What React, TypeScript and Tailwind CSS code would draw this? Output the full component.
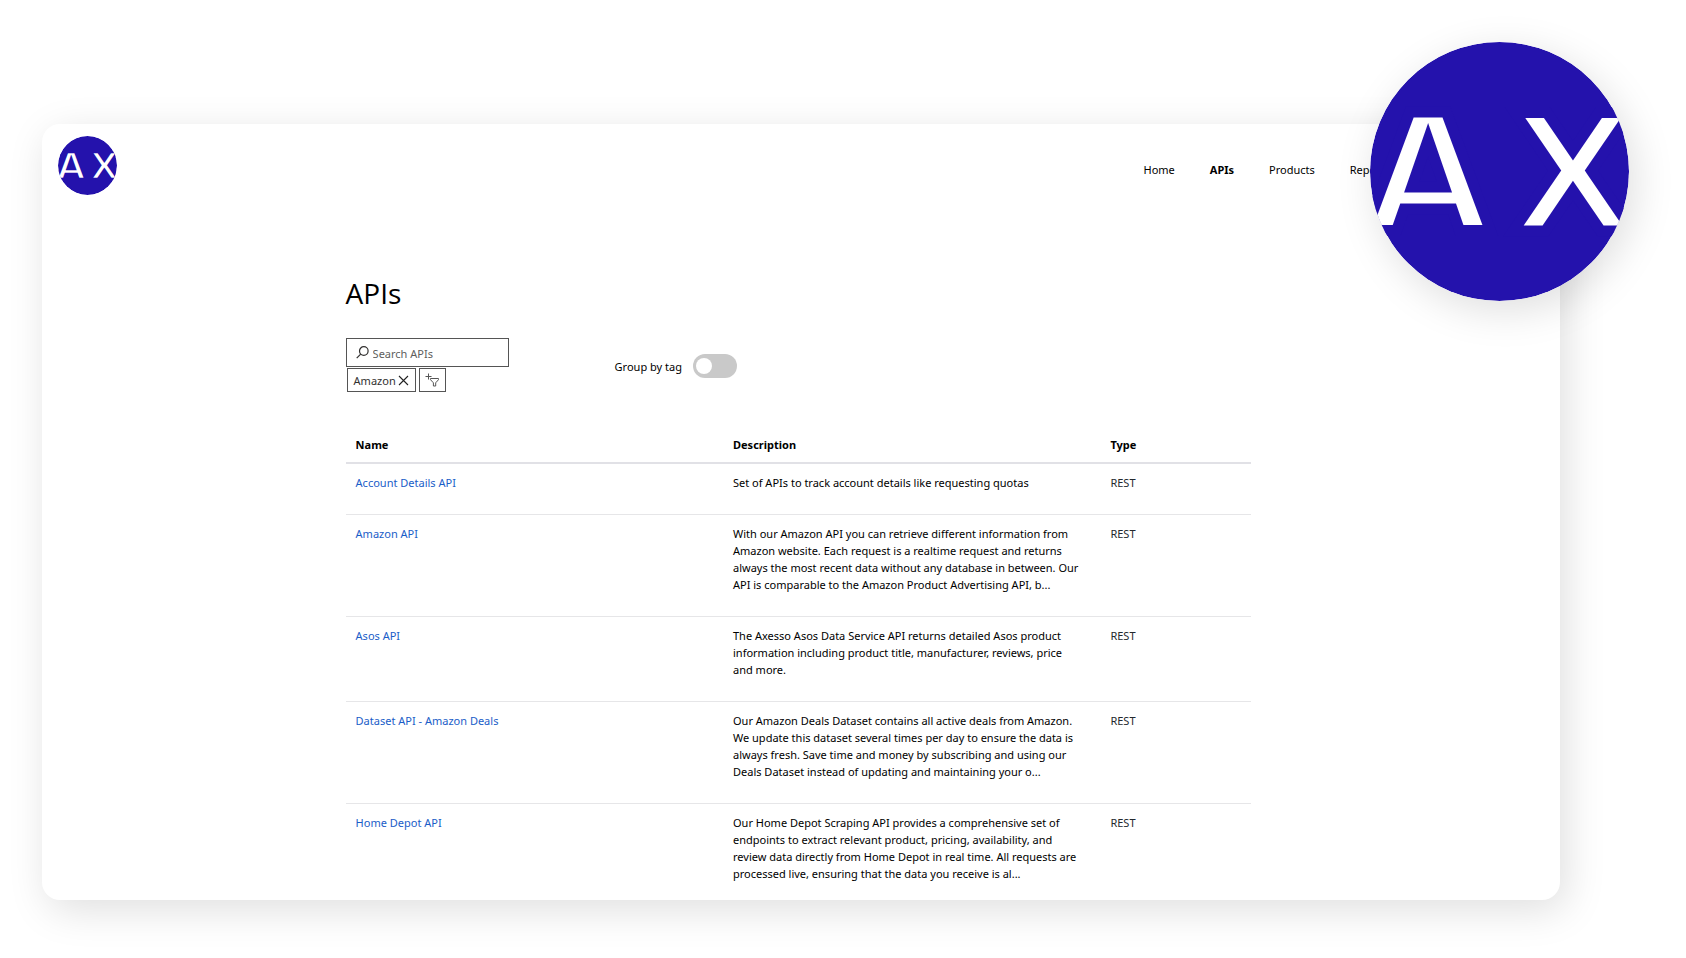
import React from 'react';

const NAV = ['Home', 'APIs', 'Products', 'Reports'];

const APIS = [
  { name: 'Account Details API', desc: 'Set of APIs to track account details like requesting quotas' },
  { name: 'Amazon API', desc: 'With our Amazon API you can retrieve different information from Amazon website. Each request is a realtime request and returns always the most recent data without any database in between. Our API is comparable to the Amazon Product Advertising API, b...' },
  { name: 'Asos API', desc: 'The Axesso Asos Data Service API returns detailed Asos product information including product title, manufacturer, reviews, price and more.' },
  { name: 'Dataset API - Amazon Deals', desc: 'Our Amazon Deals Dataset contains all active deals from Amazon. We update this dataset several times per day to ensure the data is always fresh. Save time and money by subscribing and using our Deals Dataset instead of updating and maintaining your o...' },
  { name: 'Home Depot API', desc: 'Our Home Depot Scraping API provides a comprehensive set of endpoints to extract relevant product, pricing, availability, and review data directly from Home Depot in real time. All requests are processed live, ensuring that the data you receive is al...' },
];

export default function App() {
  return (
    <div className="min-h-screen bg-white pt-[124px] pl-[42px] pr-[126px] pb-14 font-['Noto_Sans','Open_Sans',sans-serif] text-[11px] leading-[17px] text-black">
      <div className="relative rounded-[18px] bg-white shadow-[6px_10px_40px_rgba(0,0,0,0.13)]">
        {/* Header */}
        <header className="flex items-start justify-between pt-3 pl-4 pr-[170px]">
          <a href="#home" aria-label="Axesso">
            <Logo className="size-[59px] overflow-hidden rounded-full" />
          </a>
          <nav className="flex gap-[35px] pt-[25px]">
            {NAV.map((item) => (
              <a key={item} href={`#${item.toLowerCase()}`} className={item === 'APIs' ? 'font-bold' : ''}>{item}</a>
            ))}
          </nav>
        </header>

        <main className="mx-auto w-[60%] pt-[78px] pr-[5px]">
          <h1 className="font-['Open_Sans',sans-serif] text-[28px] leading-10">APIs</h1>

          {/* Filters */}
          <div className="mt-[25px] flex items-start">
            <div className="w-[269px]">
              <label className="flex h-[29px] w-[163px] items-center gap-1 border border-[#555] pl-[9px]">
                <SearchIcon />
                <input type="text" aria-label="Search APIs" placeholder="Search APIs" className="w-full min-w-0 bg-transparent pt-px outline-none placeholder:text-[#605e5c]" />
              </label>
              <div className="mt-px flex gap-[3px] pl-px">
                <button className="flex h-6 items-center gap-[2px] border border-[#555] px-[6px] text-[#323130]">
                  Amazon <CloseIcon />
                </button>
                <button aria-label="Add filter" className="flex h-6 w-[27px] items-center justify-center border border-[#555]">
                  <AddFilterIcon />
                </button>
              </div>
            </div>
            <label className="mt-4 flex cursor-pointer items-center gap-[11px]">
              Group by tag
              <input type="checkbox" role="switch" className="peer sr-only" />
              <span className="flex h-6 w-11 items-center rounded-full bg-[#c9c9c9] pl-[3px]">
                <span className="size-4 rounded-full bg-white" />
              </span>
            </label>
          </div>

          <table className="mt-8 w-full table-fixed border-collapse text-left">
            <colgroup>
              <col className="w-5/12" />
              <col className="w-5/12" />
              <col className="w-2/12" />
            </colgroup>
            <thead>
              <tr className="border-b-2 border-[#e1e1e6]">
                <th className="px-[10px] pt-3 pb-[9px] font-bold">Name</th>
                <th className="px-[10px] pt-3 pb-[9px] font-bold">Description</th>
                <th className="px-[10px] pt-3 pb-[9px] font-bold">Type</th>
              </tr>
            </thead>
            <tbody>
              {APIS.map((api) => (
                <ApiRow key={api.name} name={api.name} desc={api.desc} />
              ))}
            </tbody>
          </table>
        </main>

        <Logo className="absolute -top-[82px] -right-[69px] size-[259px] overflow-hidden rounded-full shadow-[6px_10px_40px_rgba(0,0,0,0.13)]" />
      </div>
    </div>
  );
}

const ApiRow = ({ name, desc }: any) => (
  <tr className="group border-b border-[#e6e6e8] align-top last:border-0">
    <td className="px-[10px] pt-[10px] pb-[23px] group-last:pb-[18px]">
      <a href="#api" className="text-[#1a5dc8]">{name}</a>
    </td>
    <td className="pt-[10px] pr-[18px] pb-[23px] pl-[10px] group-last:pb-[18px]">{desc}</td>
    <td className="px-[10px] pt-[10px] pb-[23px] text-[#24292e] group-last:pb-[18px]">REST</td>
  </tr>
);

const Logo = ({ className }: any) => (
  <svg viewBox="0 0 259 259" className={className}>
    <circle cx="129.5" cy="129.5" r="129.5" fill="#2412ac" />
    {/* The background-coloured stroke thins the bold letters */}
    <g fill="#fff" stroke="#2412ac" strokeWidth="11" fontFamily="DejaVu Sans, sans-serif" fontSize="163" fontWeight="700" textAnchor="middle">
      <text x="58" y="189">A</text>
      <text x="203" y="189">X</text>
    </g>
  </svg>
);

const SearchIcon = () => (
  <svg viewBox="0 0 13 13" className="size-[13px] shrink-0" fill="none" stroke="#323130" strokeWidth="1.2">
    <circle cx="7.8" cy="5" r="4.3" />
    <path d="M4.7 8.1L.7 12.2" />
  </svg>
);

const CloseIcon = () => (
  <svg viewBox="0 0 11 11" className="size-[11px]" fill="none" stroke="#222" strokeWidth="1.1">
    <path d="M1 1l9 9M10 1l-9 9" />
  </svg>
);

const AddFilterIcon = () => (
  <svg viewBox="0 0 14 14" className="size-[14px]" fill="none" stroke="#555" strokeWidth="1">
    <path d="M3.5.5v6M.5 3.5h6" />
    <path d="M5.5 5.5h8v1.2L10.7 9.8v3.2H8.4V9.8L5.5 6.7z" />
  </svg>
);
